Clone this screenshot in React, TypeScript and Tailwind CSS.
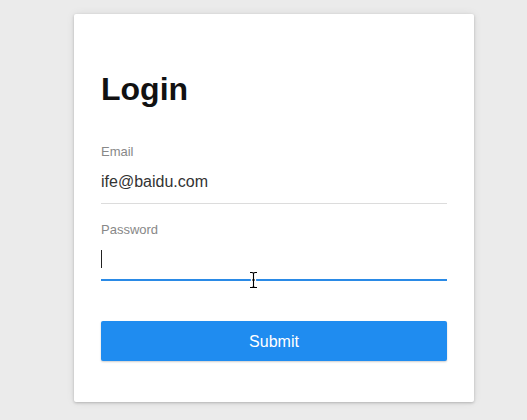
// Login card
export default function App() {
  return (
    <div className="min-h-screen bg-[#ebebeb] pt-[14px] font-['Liberation_Sans',Arial,sans-serif]">
      <div className="relative ml-[74px] w-[400px] rounded-[2px] bg-white px-[27px] pt-[55px] pb-[41px] shadow-[0_1px_3px_rgba(0,0,0,0.22),0_0_10px_rgba(0,0,0,0.07)]">
        <h1 className="text-[32px] leading-[40px] font-bold text-[#111]">Login</h1>

        <label className="mt-[34px] block text-[13px] leading-[18px] text-[#888]">Email</label>
        <div className="mt-[9px] border-b border-[#dcdcdc] pb-[9px]">
          <input
            type="text"
            defaultValue="ife@baidu.com"
            readOnly
            className="block h-[24px] w-full bg-transparent text-[16px] leading-[24px] text-[#333] outline-none"
          />
        </div>

        <label className="mt-[17px] block text-[13px] leading-[18px] text-[#888]">Password</label>
        <div className="relative mt-[8px] border-b-2 border-[#2a8ae6] pb-[8px]">
          <input
            type="password"
            readOnly
            className="block h-[24px] w-full bg-transparent text-[16px] leading-[24px] text-[#333] outline-none"
          />
          {/* caret */}
          <span className="absolute top-[3px] left-0 h-[18px] w-px bg-[#222]" />
        </div>

        <button className="mt-[40px] block h-[40px] w-full rounded-[2px] bg-[#1f8cf0] pt-[2px] text-[16px] text-white shadow-[0_1px_2px_rgba(0,0,0,0.2)]">
          Submit
        </button>

        {/* mouse I-beam */}
        <svg className="absolute left-[175px] top-[257px]" width="9" height="18" viewBox="0 0 9 18">
          <path
            d="M1 1.5 H3 Q4.5 1.5 4.5 3 V15 Q4.5 16.5 3 16.5 H1 M8 1.5 H6 Q4.5 1.5 4.5 3 M4.5 15 Q4.5 16.5 6 16.5 H8 M3 9 H6"
            fill="none"
            stroke="#fff"
            strokeWidth="2.6"
            strokeLinecap="round"
          />
          <path
            d="M1 1.5 H3 Q4.5 1.5 4.5 3 V15 Q4.5 16.5 3 16.5 H1 M8 1.5 H6 Q4.5 1.5 4.5 3 M4.5 15 Q4.5 16.5 6 16.5 H8 M3 9 H6"
            fill="none"
            stroke="#000"
            strokeWidth="1.1"
          />
        </svg>
      </div>
    </div>
  )
}
